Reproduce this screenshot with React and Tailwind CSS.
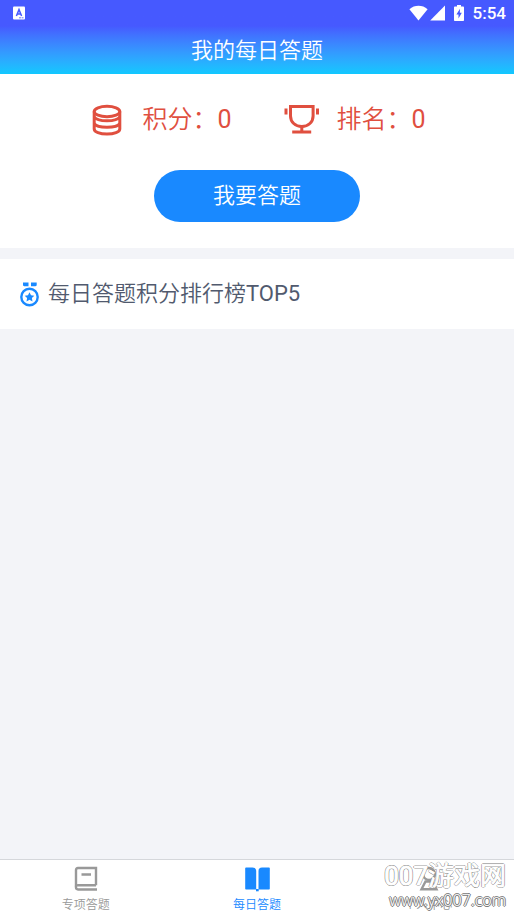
function StatusBar() {
  return (
    <div className="flex h-[26px] items-center justify-between pr-2 pl-3 text-white">
      <svg width="14" height="14" viewBox="0 0 14 14" aria-hidden="true">
        <rect x="1" y="0.5" width="12" height="13" rx="1" fill="#fff" />
        <path
          d="M4.4 10 7 3.6 9.6 10M5.4 8h3.2"
          fill="none"
          stroke="#4659ff"
          strokeWidth="1.5"
        />
        <path d="M7 11.8h4.5" stroke="#4659ff" strokeWidth="0.8" strokeDasharray="2 0.6" />
      </svg>

      <div className="flex items-center">
        <svg width="19" height="16" viewBox="0 0 19 16" fill="#fff" aria-hidden="true">
          <path d="M0.4 4.2C5.6 -0.4 13.4 -0.4 18.6 4.2L9.5 15.4Z" />
        </svg>
        <svg
          className="ml-0.5"
          width="15"
          height="16"
          viewBox="0 0 15 16"
          fill="#fff"
          aria-hidden="true"
        >
          <path d="M15 0.6V15.4H0.2Z" />
        </svg>
        <svg
          className="ml-2"
          width="12"
          height="16"
          viewBox="0 0 12 16"
          fill="#fff"
          aria-hidden="true"
        >
          <path d="M4 0h4v1.6h2.2c.5 0 .8.3.8.8v12.8c0 .5-.3.8-.8.8H1.8c-.5 0-.8-.3-.8-.8V2.4c0-.5.3-.8.8-.8H4z" />
          <path d="M7 3.8 3.4 9.4h2.1v4.2l3.3-5.8H6.8z" fill="#4659ff" />
        </svg>
        <span className="ml-2 text-[17px] leading-6 font-medium">5:54</span>
      </div>
    </div>
  );
}

function CoinsIcon() {
  return (
    <svg
      width="32"
      height="32"
      viewBox="0 0 32 32"
      fill="none"
      stroke="#e04f3f"
      strokeWidth="3"
      aria-hidden="true"
    >
      <ellipse cx="15" cy="7.5" rx="12.8" ry="5.2" />
      <path d="M2.2 7.5v17.4c0 3 5.7 5.2 12.8 5.2s12.8-2.2 12.8-5.2V7.5" />
      <path d="M2.2 13c1.5 2.3 6.5 3.8 12.8 3.8s11.3-1.5 12.8-3.8" />
      <path d="M2.2 19.6c1.5 2.3 6.5 3.7 12.8 3.7s11.3-1.4 12.8-3.7" />
    </svg>
  );
}

function TrophyIcon() {
  return (
    <svg
      width="35"
      height="32"
      viewBox="0 0 35 32"
      fill="none"
      stroke="#e04f3f"
      strokeWidth="3"
      aria-hidden="true"
    >
      <path d="M6.5 2.5h22.6V12c0 6-4.8 10.5-11.3 10.5S6.5 18 6.5 12z" />
      <path d="M17.8 22.5v5M8.2 28h19" />
      <path d="M2 4.5v6M33.5 4.5v6" />
    </svg>
  );
}

function MedalIcon() {
  return (
    <svg width="20" height="26" viewBox="0 0 20 26" aria-hidden="true">
      <path
        d="M3 1.5h5.5v3.8H4.2L3 4.5zM11 1.5h5.7v3l-1.2.8H11z"
        fill="#1989ff"
      />
      <circle cx="9.5" cy="16" r="8.2" fill="none" stroke="#1989ff" strokeWidth="2.4" />
      <path
        d="m9.5 11.3 1.5 3 3.3.5-2.4 2.3.6 3.3-3-1.6-3 1.6.6-3.3-2.4-2.3 3.3-.5z"
        fill="#1989ff"
      />
    </svg>
  );
}

function NotebookIcon() {
  return (
    <svg
      width="24"
      height="26"
      viewBox="0 0 24 26"
      fill="none"
      stroke="currentColor"
      strokeWidth="2.4"
      aria-hidden="true"
    >
      <path d="M23 23.5H4c-1.400 0-2-.6-2-2V4c0-1.400.6-2 2-2h18v17.200" />
      <path d="M2 20.500c0-.8.8-1.300 2-1.300h18M7.500 8.500h9.500" />
    </svg>
  );
}

function OpenBookIcon() {
  return (
    <svg width="26" height="26" viewBox="0 0 26 26" fill="currentColor" aria-hidden="true">
      <path d="M2 1.500h6.500c2.400 0 3.700 1.500 3.700 3.500v18.500H2c-.5 0-.8-.3-.8-.8V2.300c0-.5.3-.8.8-.8z" />
      <path d="M25 1.500h-7c-2.400 0-3.500 1.500-3.500 3.500v18.500H25c.5 0 .8-.3.8-.8V2.300c0-.5-.3-.8-.8-.8z" />
      <path d="M12 23h2.700v2.300H12z" />
    </svg>
  );
}

function UserIcon() {
  return (
    <svg
      width="24"
      height="26"
      viewBox="0 0 24 26"
      fill="none"
      stroke="currentColor"
      strokeWidth="2.4"
      aria-hidden="true"
    >
      <circle cx="13" cy="8" r="6" />
      <path d="M9.5 15.5h7l4 7.8h-15z" />
    </svg>
  );
}

const tabs = [
  { label: "专项答题", Icon: NotebookIcon },
  { label: "每日答题", Icon: OpenBookIcon, active: true },
  { label: "个人中心", Icon: UserIcon },
];

function TabBar() {
  return (
    <nav className="relative flex border-t border-[#d5d7db] bg-white">
      {tabs.map(({ label, Icon, active }) => (
        <a
          key={label}
          href="#"
          aria-current={active ? "page" : undefined}
          className={`flex flex-1 flex-col items-center pt-1.5 text-xs ${
            active ? "text-[#1989ff]" : "text-[#999999]"
          }`}
        >
          <Icon />
          <span className="mt-1 leading-[18px]">{label}</span>
        </a>
      ))}
      <Watermark />
    </nav>
  );
}

function Watermark() {
  return (
    <div className="pointer-events-none absolute right-2 bottom-1 flex flex-col items-end text-white [text-shadow:1px_0_#777777,-1px_0_#777777,0_1px_#777777,0_-1px_#777777]">
      <span className="text-[26px] leading-7 font-normal [-webkit-text-stroke:1px_#ffffff]">
        007游戏网
      </span>
      <span className="font-['Noto_Sans',sans-serif] text-base leading-5 font-light">
        www.yx007.com
      </span>
    </div>
  );
}

function Stat({ icon, label, value }) {
  return (
    <div className="flex items-center gap-[18px]">
      {icon}
      <span>
        {label}：<span className="font-normal">{value}</span>
      </span>
    </div>
  );
}

export default function App() {
  return (
    <div className="flex min-h-screen flex-col bg-[#f3f4f8] font-[Roboto,'Noto_Sans_CJK_SC_DemiLight','Noto_Sans_CJK_SC',sans-serif] font-[350]">
      <header className="bg-linear-to-b from-[#4659ff] from-35% to-[#10c8ff] pb-1.5">
        <StatusBar />
        <h1 className="pt-2 text-center text-[22px] leading-[34px] font-[350] text-white">
          我的每日答题
        </h1>
      </header>

      <main className="flex-1">
        <section className="bg-white pt-7 pb-[26px]">
          <div className="flex justify-center gap-[52px] pl-1 text-[25px] leading-9 text-[#e04f3f]">
            <Stat icon={<CoinsIcon />} label="积分" value={0} />
            <Stat icon={<TrophyIcon />} label="排名" value={0} />
          </div>
          <button
            type="button"
            className="mx-auto mt-8 block h-[52px] w-2/5 rounded-full bg-[#1989ff] pb-0.5 text-[22px] text-white"
          >
            我要答题
          </button>
        </section>

        <section className="mt-[11px] flex h-[70px] items-center gap-2 bg-white px-5">
          <MedalIcon />
          <h2 className="text-[22px] leading-8 text-[#515a6e]">
            每日答题积分排行榜<span className="font-normal">TOP5</span>
          </h2>
        </section>
      </main>

      <TabBar />
    </div>
  );
}
